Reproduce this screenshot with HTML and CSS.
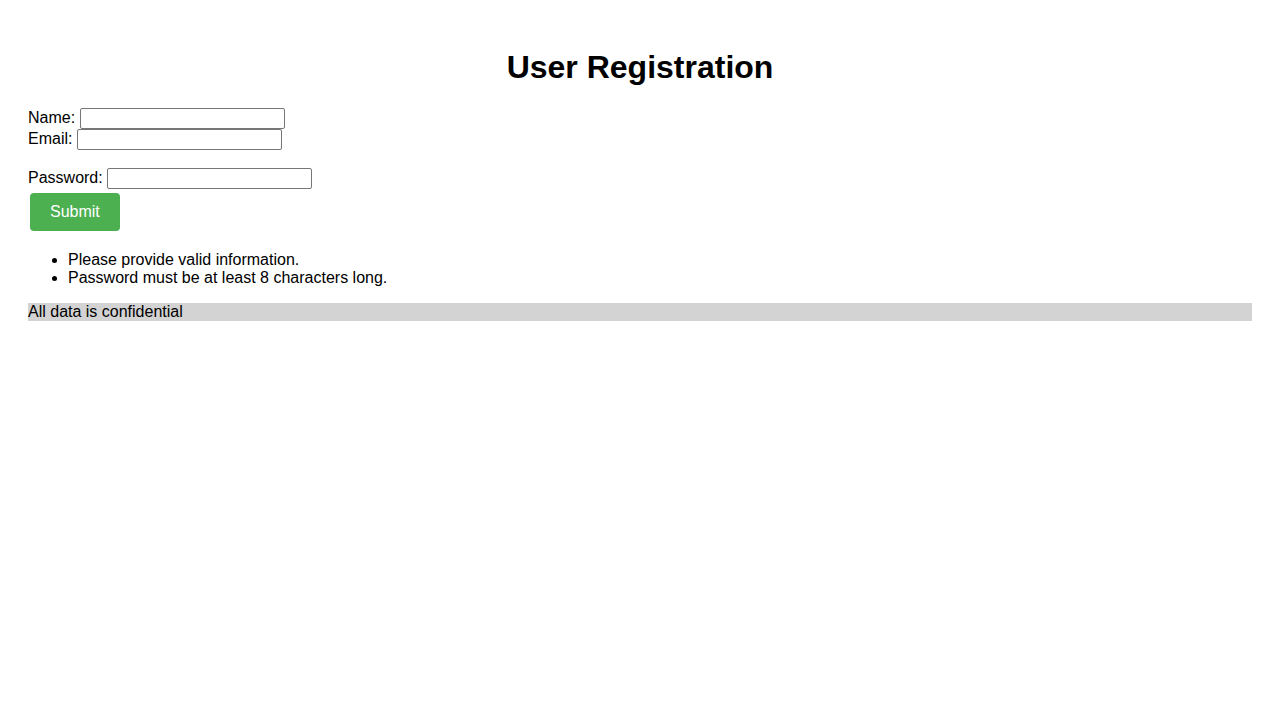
FILE: index.html
```html
<!DOCTYPE html>
<html>
<head>
<meta charset="utf-8">
<title>User Registration</title>
<link rel="stylesheet" href="styles.css">
</head>
<body>
<h1 class="title">User Registration</h1>
<form class="form">
<label class="field-label">Name:</label> <input class="field" type="text"><br>
<label class="field-label">Email:</label> <input class="field" type="email"><br><br>
<label class="field-label">Password:</label> <input class="field" type="password">
<button class="submit" type="button">Submit</button>
</form>
<ul class="notes">
<li>Please provide valid information.</li>
<li>Password must be at least 8 characters long.</li>
</ul>
<div class="footer">All data is confidential</div>
</body>
</html>
```
FILE: styles.css
```css
body {
  margin: 8px;
  padding: 20px;
  font-family: "Liberation Sans", Arial, sans-serif;
  font-size: 16px;
  color: #000;
  background: #fff;
}
.title {
  text-align: center;
  font-size: 32px;
  margin: 21.44px 0;
  font-weight: bold;
}
.form {
  margin: 0;
}
.field {
  box-sizing: border-box;
  width: 205px;
  height: 21px;
  border: 1px solid #767676;
  border-radius: 2px;
  padding: 1px 2px;
  font-family: "Liberation Sans", Arial, sans-serif;
  font-size: 13.33px;
  margin: 0;
}
.submit {
  display: block;
  margin: 4px 2px;
  padding: 10px 20px;
  background: #4CAF50;
  color: #fff;
  border: none;
  border-radius: 4px;
  font-family: "Liberation Sans", Arial, sans-serif;
  font-size: 16px;
  line-height: 18px;
}
.notes {
  margin: 20px 0 16px;
  padding-left: 40px;
}
.footer {
  background: #d3d3d3;
}
```
